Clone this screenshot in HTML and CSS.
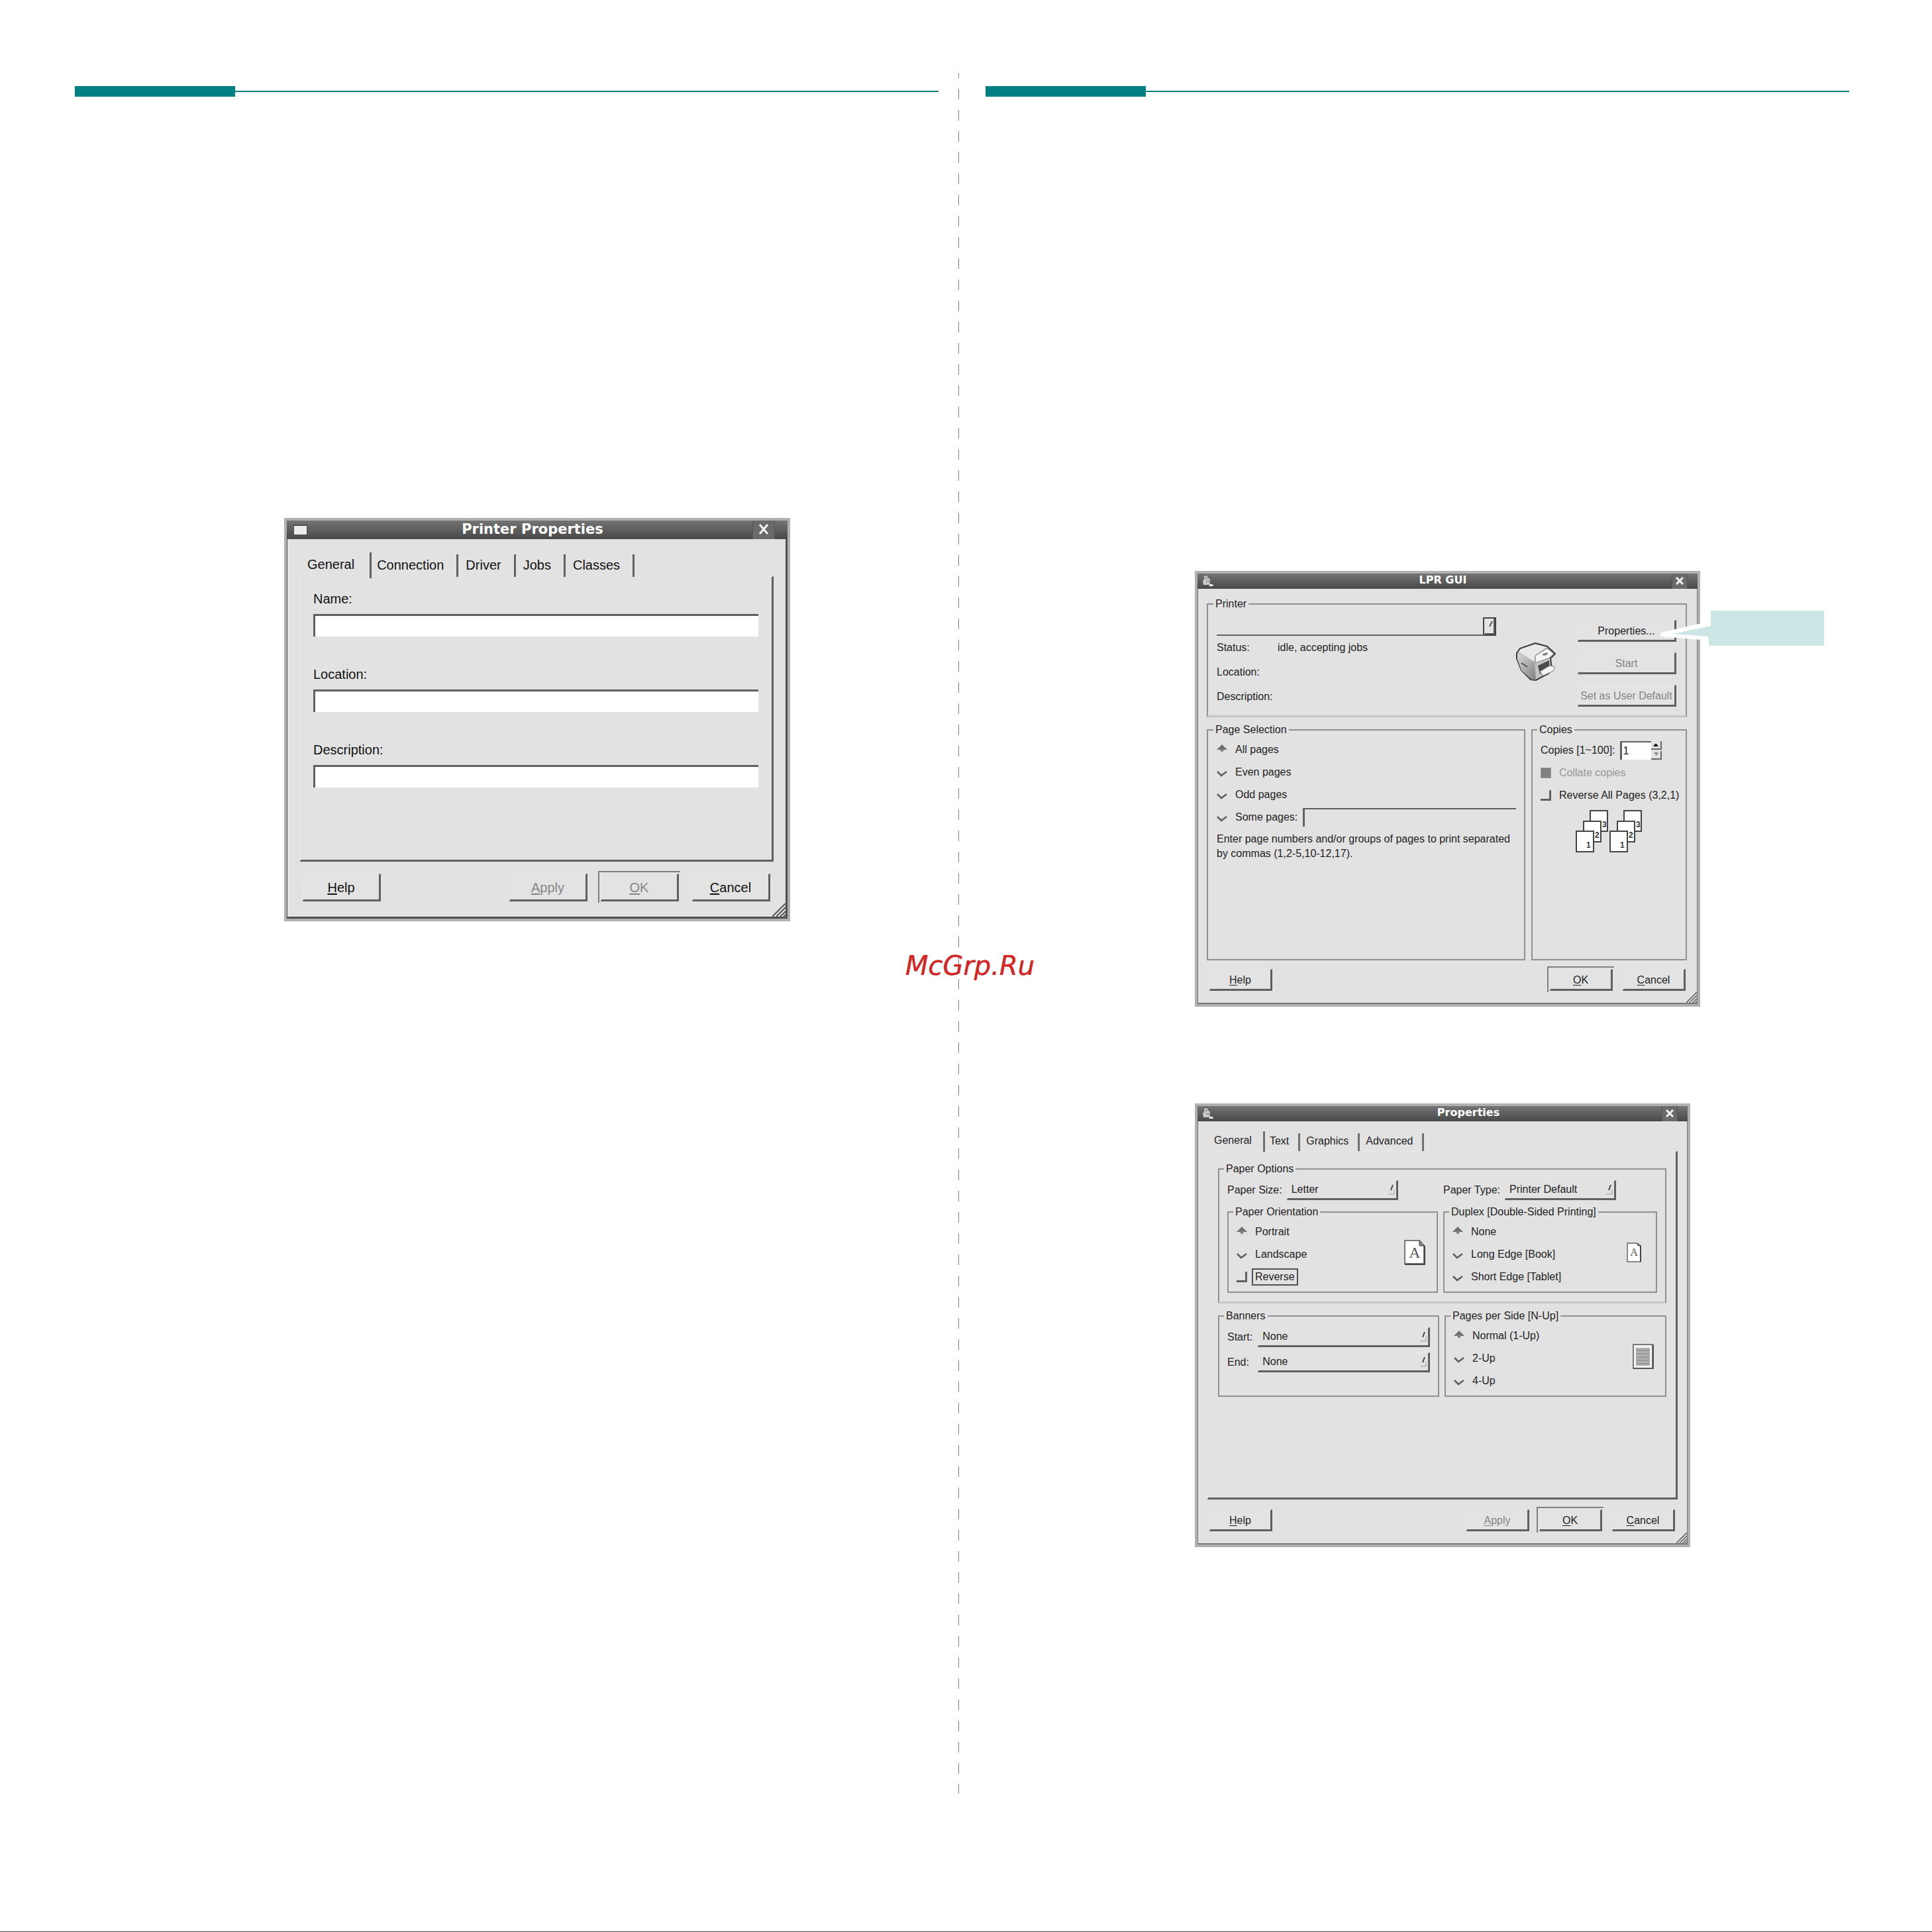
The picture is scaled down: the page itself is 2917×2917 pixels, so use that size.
FILE: index.html
```html
<!DOCTYPE html>
<html lang="en">
<head>
<meta charset="utf-8">
<title>Printer Properties</title>
<link rel="stylesheet" href="styles.css">
</head>
<body>
<main class="page">
  <section class="column">
    <div class="rule"></div>
    <form class="dialog dialog-large">
      <header class="titlebar">
        <svg class="app-icon" width="21" height="16" viewBox="0 0 21 16" aria-hidden="true"><rect width="21" height="16" fill="#4c4c4c"/><rect x="1" y="2" width="19" height="13" fill="#ececec"/></svg>
        <h2>Printer Properties</h2>
        <button type="button" class="close" aria-label="Close"><svg width="16" height="16" viewBox="0 0 16 16"><path d="M2 1l12 14M14 1L2 15" stroke="#f2f2f2" stroke-width="3" fill="none"/></svg></button>
      </header>
      <div class="body">
        <div class="tabs" role="tablist">
          <button type="button" role="tab" class="tab active" aria-selected="true">General</button>
          <button type="button" role="tab" class="tab">Connection</button>
          <button type="button" role="tab" class="tab">Driver</button>
          <button type="button" role="tab" class="tab">Jobs</button>
          <button type="button" role="tab" class="tab">Classes</button>
        </div>
        <div class="panel fields">
          <div class="field"><label for="name">Name:</label><input id="name" type="text" class="entry"></div>
          <div class="field"><label for="location">Location:</label><input id="location" type="text" class="entry"></div>
          <div class="field"><label for="description">Description:</label><input id="description" type="text" class="entry"></div>
        </div>
        <footer class="actions">
          <button type="button" class="btn help"><u>H</u>elp</button>
          <button type="button" class="btn" disabled><u>A</u>pply</button>
          <button type="button" class="btn default" disabled><u>O</u>K</button>
          <button type="button" class="btn"><u>C</u>ancel</button>
        </footer>
        <svg class="grip" viewBox="0 0 20 20" aria-hidden="true"><path d="M0 20L20 0M6 20L20 6M12 20l8-8M17 20l3-3" stroke="#555" stroke-width="2"/></svg>
      </div>
    </form>
  </section>

  <div class="divider"></div>

  <section class="column">
    <div class="rule"></div>
    <form class="dialog lpr">
      <header class="titlebar">
        <svg class="app-icon" width="18" height="17" viewBox="0 0 18 17" aria-hidden="true"><path d="M3 1l4-1 2 3 3 3 0 6-3 2-7 0-1-6 2-2z" fill="#c9c9c9"/><path d="M4 4h4M6 9h6" stroke="#666" stroke-width="1"/><path d="M10 13l6 0 1 3-6 0z" fill="#e8e8e8"/></svg>
        <h2>LPR GUI</h2>
        <button type="button" class="close" aria-label="Close"><svg width="12" height="12" viewBox="0 0 12 12"><path d="M1 1l10 10M11 1L1 11" stroke="#f2f2f2" stroke-width="3" fill="none"/></svg></button>
      </header>
      <div class="body">
        <fieldset class="printer soft">
          <legend>Printer</legend>
          <div class="info">
            <span class="combo">
              <select aria-label="Printer name"></select>
              <svg width="20" height="28" viewBox="0 0 20 28" aria-hidden="true"><rect x="1" y="1" width="18" height="26" fill="#e4e4e4" stroke="#444" stroke-width="2"/><path d="M17 2v23H3" fill="none" stroke="#555" stroke-width="2"/><path d="M10 14l4-8" stroke="#555" stroke-width="2"/></svg>
            </span>
            <dl>
              <dt>Status:</dt><dd>idle, accepting jobs</dd>
              <dt>Location:</dt><dd></dd>
              <dt>Description:</dt><dd></dd>
            </dl>
          </div>
          <svg class="printer-icon" width="60" height="58" viewBox="0 0 60 58" aria-hidden="true">
            <defs><linearGradient id="side" x1="0" y1="0" x2="1" y2="1"><stop offset="0" stop-color="#d8d8d8"/><stop offset="1" stop-color="#808080"/></linearGradient></defs>
            <path d="M30 52l16-2 12-9-4-8z" fill="#6e6e6e"/>
            <path d="M1 16L6 9 29 1l18 5 12 11-7 7 1 8-3 14-20 11-8-1L8 42 1 24z" fill="#c4c4c4" stroke="#3c3c3c" stroke-width="2"/>
            <path d="M2 17l26 13 2 27-8-2L8 42 2 25z" fill="url(#side)"/>
            <path d="M4 14l3-4 22-7 17 4-17 12-2 9z" fill="#eaeaea"/>
            <path d="M29 20l18-11 10 8-8 7-20 7z" fill="#f6f6f6" stroke="#777"/>
            <path d="M39 18l8-3 1 3-6 2z" fill="#777"/>
            <path d="M33 35l17-8v10l-14 11z" fill="#4c4c4c"/>
            <path d="M36 44l15-9 8 2-3 6-15 7z" fill="#f4f4f4" stroke="#888"/>
            <path d="M8 31l9 6" stroke="#555" stroke-width="2"/>
          </svg>
          <div class="side-buttons">
            <button type="button" class="btn">Properties...</button>
            <button type="button" class="btn" disabled>Start</button>
            <button type="button" class="btn" disabled>Set as User Default</button>
          </div>
        </fieldset>
        <div class="split">
          <fieldset class="selection">
            <legend>Page Selection</legend>
            <div class="options">
              <label class="opt"><input type="radio" name="pages" checked>All pages</label>
              <label class="opt"><input type="radio" name="pages">Even pages</label>
              <label class="opt"><input type="radio" name="pages">Odd pages</label>
              <div class="some"><label class="opt"><input type="radio" name="pages">Some pages:</label><input type="text" class="entry" aria-label="Page range"></div>
            </div>
            <p>Enter page numbers and/or groups of pages to print separated<br>by commas (1,2-5,10-12,17).</p>
          </fieldset>
          <fieldset class="copies">
            <legend>Copies</legend>
            <div class="options">
              <div class="count"><label for="copies">Copies [1~100]:</label><input id="copies" type="text" class="entry" value="1"><svg width="16" height="28" viewBox="0 0 16 28" aria-hidden="true"><path d="M15 0v12H0M15 15v12H0" fill="none" stroke="#666" stroke-width="2"/><path d="M3 8l3-4h2l3 4z" fill="#111"/><path d="M4 17h7l-3 5z" fill="#888"/></svg></div>
              <label class="opt off"><input type="checkbox" checked disabled>Collate copies</label>
              <label class="opt"><input type="checkbox">Reverse All Pages (3,2,1)</label>
            </div>
            <svg class="sheets" width="102" height="66" viewBox="0 0 102 66" role="img" aria-label="Collated pages">
              <g id="stack" fill="#fff" stroke="#444" stroke-width="2">
                <rect x="22" y="1" width="26" height="31"/><text class="num" x="40" y="26">3</text>
                <rect x="12" y="17" width="26" height="31"/><text class="num" x="29" y="42">2</text>
                <rect x="1" y="32" width="26" height="31"/><text class="num" x="16" y="57">1</text>
              </g>
              <use href="#stack" x="51"/>
            </svg>
          </fieldset>
        </div>
        <footer class="actions">
          <button type="button" class="btn help"><u>H</u>elp</button>
          <button type="button" class="btn default"><u>O</u>K</button>
          <button type="button" class="btn"><u>C</u>ancel</button>
        </footer>
        <svg class="grip" viewBox="0 0 20 20" aria-hidden="true"><path d="M0 20L20 0M6 20L20 6M12 20l8-8M17 20l3-3" stroke="#666" stroke-width="2"/></svg>
      </div>
      <svg class="callout" width="248" height="54" viewBox="0 0 248 54" aria-hidden="true">
        <path d="M76 16L0 33v6l74 6z" fill="#fff"/>
        <path d="M76 0h171v53H74l-2-14-53-4 57-12z" fill="#cce6e5"/>
      </svg>
    </form>

    <form class="dialog props">
      <header class="titlebar">
        <svg class="app-icon" width="18" height="17" viewBox="0 0 18 17" aria-hidden="true"><path d="M3 1l4-1 2 3 3 3 0 6-3 2-7 0-1-6 2-2z" fill="#c9c9c9"/><path d="M4 4h4M6 9h6" stroke="#666" stroke-width="1"/><path d="M10 13l6 0 1 3-6 0z" fill="#e8e8e8"/></svg>
        <h2>Properties</h2>
        <button type="button" class="close" aria-label="Close"><svg width="12" height="12" viewBox="0 0 12 12"><path d="M1 1l10 10M11 1L1 11" stroke="#f2f2f2" stroke-width="3" fill="none"/></svg></button>
      </header>
      <div class="body">
        <div class="tabs" role="tablist">
          <button type="button" role="tab" class="tab active" aria-selected="true">General</button>
          <button type="button" role="tab" class="tab">Text</button>
          <button type="button" role="tab" class="tab">Graphics</button>
          <button type="button" role="tab" class="tab">Advanced</button>
        </div>
        <div class="panel">
          <fieldset class="paper soft">
            <legend>Paper Options</legend>
            <div class="paper-grid">
              <div class="pick"><label for="size">Paper Size:</label><select id="size" class="drop"><option>Letter</option></select></div>
              <div class="pick"><label for="type">Paper Type:</label><select id="type" class="drop"><option>Printer Default</option></select></div>
              <fieldset class="with-icon">
                <legend>Paper Orientation</legend>
                <div class="options">
                  <label class="opt"><input type="radio" name="orient" checked>Portrait</label>
                  <label class="opt"><input type="radio" name="orient">Landscape</label>
                  <label class="opt"><input type="checkbox"><span class="focus">Reverse</span></label>
                </div>
                <svg width="32" height="38" viewBox="0 0 32 38" aria-hidden="true"><path d="M1 1h22l7 8v27H1z" fill="#fff" stroke="#777" stroke-width="2"/><path d="M31 9v28H1" fill="none" stroke="#444" stroke-width="2"/><path d="M23 1v8h8z" fill="#888" stroke="#444"/><text class="letter" x="16" y="27">A</text></svg>
              </fieldset>
              <fieldset class="with-icon">
                <legend>Duplex [Double-Sided Printing]</legend>
                <div class="options">
                  <label class="opt"><input type="radio" name="duplex" checked>None</label>
                  <label class="opt"><input type="radio" name="duplex">Long Edge [Book]</label>
                  <label class="opt"><input type="radio" name="duplex">Short Edge [Tablet]</label>
                </div>
                <svg width="32" height="30" viewBox="0 0 32 30" aria-hidden="true"><path d="M6 1h15l5 5v23H6z" fill="#fff" stroke="#888" stroke-width="2"/><path d="M26 4v25" stroke="#444" stroke-width="2"/><path d="M21 1v4h5z" fill="#555"/><text class="letter small" x="16" y="20">A</text></svg>
              </fieldset>
            </div>
          </fieldset>
          <div class="lower-grid">
            <fieldset>
              <legend>Banners</legend>
              <div class="banners">
                <label for="start">Start:</label><select id="start" class="drop"><option>None</option></select>
                <label for="end">End:</label><select id="end" class="drop"><option>None</option></select>
              </div>
            </fieldset>
            <fieldset class="with-icon">
              <legend>Pages per Side [N-Up]</legend>
              <div class="options">
                <label class="opt"><input type="radio" name="nup" checked>Normal (1-Up)</label>
                <label class="opt"><input type="radio" name="nup">2-Up</label>
                <label class="opt"><input type="radio" name="nup">4-Up</label>
              </div>
              <svg width="32" height="38" viewBox="0 0 32 38" aria-hidden="true"><rect x="1" y="1" width="29" height="36" fill="#f4f4f4" stroke="#777" stroke-width="2"/><path d="M31 1v36H1" fill="none" stroke="#555" stroke-width="2"/><rect x="5" y="6" width="21" height="27" fill="#b0b0b0"/><path d="M5 10h21M5 15h21M5 20h21M5 25h21M5 30h21" stroke="#9a9a9a" stroke-width="2"/></svg>
            </fieldset>
          </div>
        </div>
        <footer class="actions">
          <button type="button" class="btn help"><u>H</u>elp</button>
          <button type="button" class="btn" disabled><u>A</u>pply</button>
          <button type="button" class="btn default"><u>O</u>K</button>
          <button type="button" class="btn"><u>C</u>ancel</button>
        </footer>
        <svg class="grip" viewBox="0 0 20 20" aria-hidden="true"><path d="M0 20L20 0M6 20L20 6M12 20l8-8M17 20l3-3" stroke="#666" stroke-width="2"/></svg>
      </div>
    </form>
  </section>
  <div class="watermark"><span>McGrp.Ru</span></div>
</main>
</body>
</html>
```

FILE: styles.css
```css
* { box-sizing: border-box; }

body {
  margin: 0;
  background: #fff;
  color: #222;
  font: 16px/20px "Liberation Sans", Arial, sans-serif;
}

button, input, select {
  margin: 0;
  border-radius: 0;
  appearance: none;
  color: inherit;
  font: inherit;
}

svg { display: block; flex: none; }

/* Two-column page */
.page {
  position: relative;
  display: grid;
  grid-template-columns: minmax(0, 1fr) auto minmax(0, 1fr);
  min-height: 100vh;
  padding: 110px 125px 208px 113px;
  border-bottom: 1px solid #444;
}

.column { padding-top: 20px; }

.rule {
  height: 16px;
  background:
    linear-gradient(#008080, #008080) 0 0 / 242px 16px no-repeat,
    linear-gradient(#008080, #008080) 0 7px / 100% 2px no-repeat;
}

.divider {
  width: 1px;
  margin: 0 40px 0 30px;
  background: repeating-linear-gradient(#808080 0 16px, transparent 16px 32px) 0 -8px / 1px calc(100% + 8px) no-repeat;
}

.watermark {
  position: absolute;
  inset: 0;
  display: grid;
  place-items: center;
  padding-left: 12px;
  pointer-events: none;
  color: #dc2323;
  font: italic 40px/48px "DejaVu Sans", sans-serif;
  text-shadow: 0 0 1px #666;
}

/* Window frame */
.dialog {
  position: relative;
  max-width: 763px;
  margin: 716px 0 0 316px;
  border: 4px solid #b0b0b0;
  background: #e2e2e2;
}

.dialog-large {
  max-width: 764px;
  margin-top: 636px;
  color: #111;
  font-size: 20px;
  line-height: 24px;
}

.props { max-width: 748px; margin-top: 146px; }

.titlebar {
  display: flex;
  align-items: center;
  height: 23px;
  padding: 0 15px 0 7px;
  background: linear-gradient(#747474, #484848);
  color: #fff;
}

.titlebar h2 {
  flex: 1;
  margin: 0;
  padding-bottom: 3px;
  font: bold 16px/20px "DejaVu Sans", sans-serif;
  text-align: center;
}

.props h2 { padding-left: 92px; }

.close {
  display: grid;
  place-items: center;
  width: 24px;
  height: 100%;
  padding: 0 0 2px;
  border: 0;
  border-left: 1px solid #555;
  border-right: 1px solid #555;
  background: #6a6a6a;
}

.dialog-large .titlebar { height: 28px; padding: 0 19px 0 10px; }
.dialog-large .titlebar h2 { padding-left: 8px; font-size: 21px; line-height: 24px; }
.dialog-large .close { width: 34px; }

.body {
  position: relative;
  padding: 13px 15px 18px 13px;
  border: solid #777;
  border-width: 0 1px 2px;
}

.props .body { padding: 15px 14px 18px; }

.dialog-large .body {
  padding: 20px 18px 23px 19px;
  border-color: #505050;
  border-width: 0 3px 3px 1px;
}

.grip { position: absolute; right: 0; bottom: 0; width: 16px; height: 16px; }
.dialog-large .grip { width: 20px; height: 20px; }

/* Tabs */
.tabs { display: flex; height: 31px; }

.tab {
  margin: 3px 0 1px;
  padding: 0 14px 3px 9px;
  border: 0;
  border-right: 3px solid #707070;
  background: none;
}

.tab.active { margin: 0; padding: 0 17px 3px 10px; }
.tab.active + .tab { padding-left: 7px; }

.dialog-large .tabs { height: 39px; }
.dialog-large .tab { margin-bottom: 2px; padding: 0 19px 3px 11px; border-color: #606060; }
.dialog-large .tab.active { margin-bottom: 0; padding: 0 23px 3px 11px; }
.dialog-large .tab.active + .tab { padding-left: 8px; }

.panel {
  min-height: 526px;
  margin-top: -1px;
  padding: 16px 14px 16px 15px;
  border: solid #606060;
  border-width: 1px 3px 3px 1px;
  border-top-color: #e6e6e6;
  border-left-color: #e9e9e9;
}

.fields {
  display: flex;
  flex-direction: column;
  gap: 45px;
  min-height: 431px;
  margin-top: -3px;
  padding: 21px 20px 20px 19px;
}

.field { display: grid; gap: 11px; }

.entry {
  min-width: 0;
  padding: 0 4px;
  border: solid #606060;
  border-width: 3px 0 0 3px;
  background: #fff;
}

.field .entry { height: 34px; }

/* Push buttons */
.btn {
  position: relative;
  width: 95px;
  height: 33px;
  padding: 2px 0 0;
  border: solid #606060;
  border-width: 1px 3px 3px 1px;
  border-top-color: #e6e6e6;
  border-left-color: #e6e6e6;
  background: #e3e3e3;
  white-space: nowrap;
}

.dialog-large .btn { width: 118px; height: 42px; }
.btn:disabled { color: #858585; }
.btn u { text-underline-offset: 2px; }

.default::before {
  content: "";
  position: absolute;
  inset: -5px -5px -5px -5px;
  border: solid #808080;
  border-width: 2px 0 0 2px;
}

.actions { display: flex; gap: 15px; padding: 13px 2px 0 4px; }
.help { margin-right: auto; }
.props .actions { padding: 15px 4px 0 3px; }
.dialog-large .actions { gap: 20px; padding: 18px 5px 0 4px; }

/* Group boxes */
fieldset {
  min-width: 0;
  margin: 0;
  padding: 0 12px;
  border: 2px solid #909090;
}

legend { margin-left: -5px; padding: 0 3px; }

.soft { border-bottom: 3px solid #c5c5c5; }

.printer { display: flex; padding: 0 14px 13px 13px; }
.info { width: 422px; padding-top: 10px; }

.combo { position: relative; display: block; height: 28px; }
.combo select {
  width: 100%;
  height: 28px;
  border: 0;
  border-bottom: 2px solid #606060;
  background: none;
}
.combo svg { position: absolute; top: 0; right: 0; }

dl {
  display: grid;
  grid-template-columns: 92px 1fr;
  row-gap: 17px;
  margin: 8px 0 0;
}
dd { margin: 0; }

.printer-icon { margin: 48px 0 0 30px; }

.side-buttons { display: grid; gap: 16px; margin-left: auto; padding-top: 14px; }
.side-buttons .btn { width: 149px; }

.split {
  display: grid;
  grid-template-columns: minmax(0, 1fr) 235px;
  gap: 9px;
  min-height: 358px;
  margin-top: 9px;
}

.options { display: grid; gap: 6px; padding-top: 6px; }
.copies .options { padding-top: 7px; }
.selection { padding-left: 13px; }

.opt { display: flex; align-items: center; gap: 12px; height: 28px; white-space: nowrap; }
.off { color: #999; }

.opt input { flex: none; width: 16px; height: 16px; }

.opt input[type="radio"] {
  background: url("data:image/svg+xml,%3Csvg xmlns='http://www.w3.org/2000/svg' viewBox='0 0 16 16'%3E%3Cpath d='M1 7l6 6 8-6' fill='none' stroke='%23606060' stroke-width='2.6'/%3E%3C/svg%3E") no-repeat;
}
.opt input[type="radio"]:checked {
  background-image: url("data:image/svg+xml,%3Csvg xmlns='http://www.w3.org/2000/svg' viewBox='0 0 16 16'%3E%3Cpath d='M8 0l8 8H0z' fill='%23707070'/%3E%3Cpath d='M4 7h8l-4 5z' fill='%23808080'/%3E%3C/svg%3E");
}
.opt input[type="checkbox"] { border: solid #606060; border-width: 0 3px 3px 0; }
.opt input[type="checkbox"]:checked { border: 1px solid #999; background: #808080; }

.some { display: flex; gap: 8px; }
.some .entry { flex: 1; border-width: 2px 0 0 3px; background: none; }

.selection p { margin: 8px 0 0; line-height: 22px; white-space: nowrap; }

.count { display: flex; align-items: center; height: 28px; }
.count .entry { width: 47px; height: 28px; margin-left: 7px; padding: 0 2px; border-width: 2px 0 0 3px; }

.sheets { margin: 8px auto 0; }
.num { fill: #333; stroke: none; font: bold 12px "Liberation Sans", Arial, sans-serif; }

.callout { position: absolute; top: 56px; left: 699px; }

/* Printing options */
.paper { padding: 7px 12px 13px; }

.paper-grid { display: grid; grid-template-columns: 318px minmax(0, 1fr); gap: 8px; }

.lower-grid {
  display: grid;
  grid-template-columns: 334px minmax(0, 1fr);
  gap: 8px;
  margin-top: 9px;
}

.pick { display: flex; align-items: center; gap: 7px; }

.drop {
  width: 168px;
  height: 30px;
  padding: 0 8px 0 6px;
  border: solid #606060;
  border-width: 1px 3px 3px 1px;
  border-top-color: #e6e6e6;
  border-left-color: #e6e6e6;
  background: url("data:image/svg+xml,%3Csvg xmlns='http://www.w3.org/2000/svg' viewBox='0 0 10 18'%3E%3Cpath d='M4 10l3-8' stroke='%23444' stroke-width='2'/%3E%3Cpath d='M0 16h9V9' fill='none' stroke='%23999'/%3E%3C/svg%3E") right 2px center / 10px 18px no-repeat;
}

.with-icon { display: flex; align-items: center; justify-content: space-between; padding: 0 17px 8px 12px; }
.with-icon .options { padding-top: 6px; }

.focus { margin-left: -5px; padding: 1px 3px; border: 2px solid #505050; }

.banners {
  display: grid;
  grid-template-columns: auto minmax(0, 1fr);
  align-items: center;
  gap: 8px;
  padding-top: 7px;
}
.banners .drop { width: 100%; }

.letter { fill: #555; font: 24px "Liberation Serif", serif; text-anchor: middle; }
.small { font-size: 16px; }
```
